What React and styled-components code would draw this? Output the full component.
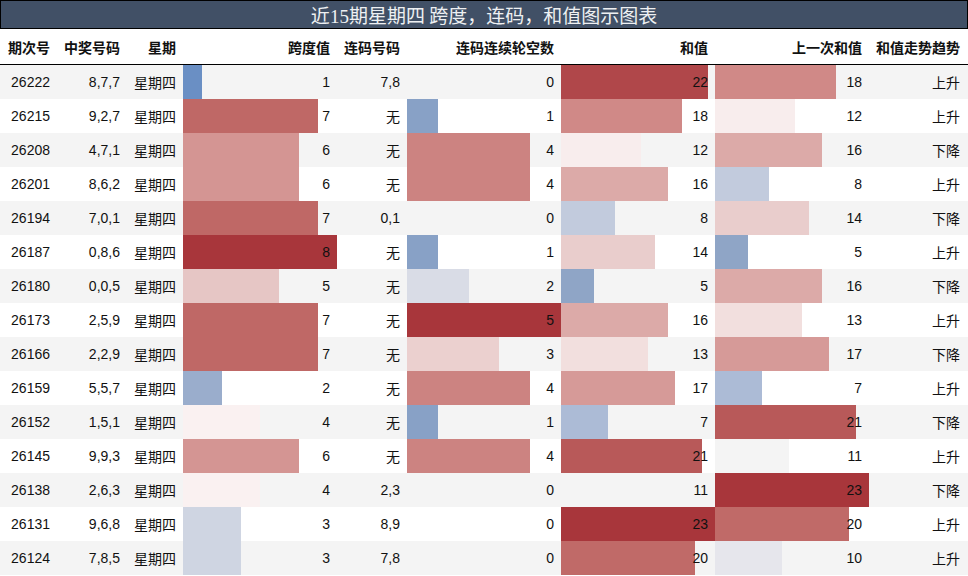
import React from 'react'
import styled, { createGlobalStyle } from 'styled-components'

const GlobalStyle = createGlobalStyle`
  html, body {
    margin: 0;
    padding: 0;
    background: #fff;
  }
  body {
    font-family: 'Liberation Sans', 'Noto Sans CJK SC', sans-serif;
    color: #111;
  }
`

const COLS = '57px 70px 56px 154px 70px 154px 154px 154px 98px'

const rows = [
  ['26222', '8,7,7', 1, '7,8', 0, 22, 18, '上升'],
  ['26215', '9,2,7', 7, '无', 1, 18, 12, '上升'],
  ['26208', '4,7,1', 6, '无', 4, 12, 16, '下降'],
  ['26201', '8,6,2', 6, '无', 4, 16, 8, '上升'],
  ['26194', '7,0,1', 7, '0,1', 0, 8, 14, '下降'],
  ['26187', '0,8,6', 8, '无', 1, 14, 5, '上升'],
  ['26180', '0,0,5', 5, '无', 2, 5, 16, '下降'],
  ['26173', '2,5,9', 7, '无', 5, 16, 13, '上升'],
  ['26166', '2,2,9', 7, '无', 3, 13, 17, '下降'],
  ['26159', '5,5,7', 2, '无', 4, 17, 7, '上升'],
  ['26152', '1,5,1', 4, '无', 1, 7, 21, '下降'],
  ['26145', '9,9,3', 6, '无', 4, 21, 11, '上升'],
  ['26138', '2,6,3', 4, '2,3', 0, 11, 23, '下降'],
  ['26131', '9,6,8', 3, '8,9', 0, 23, 20, '上升'],
  ['26124', '7,8,5', 3, '7,8', 0, 20, 10, '上升'],
]

// diverging palette, blue (low) -> light -> red (high)
const stops = [
  [0, '#4a76b8'],
  [0.125, '#6a8fc4'],
  [0.217, '#8fa5c6'],
  [0.304, '#acbbd6'],
  [0.375, '#cfd5e2'],
  [0.435, '#e6e6ec'],
  [0.478, '#f4f4f4'],
  [0.5, '#faf1f1'],
  [0.52, '#f8eeee'],
  [0.565, '#f2dfde'],
  [0.625, '#e6c6c5'],
  [0.696, '#dcaaa8'],
  [0.78, '#d08a88'],
  [0.87, '#c06a68'],
  [1, '#a8363b'],
]

const hex = h => [1, 3, 5].map(i => parseInt(h.slice(i, i + 2), 16))

const colorAt = t => {
  for (let i = 1; i < stops.length; i++) {
    const [t1, c1] = stops[i]
    const [t0, c0] = stops[i - 1]
    if (t <= t1) {
      const f = (t - t0) / (t1 - t0)
      const a = hex(c0)
      const b = hex(c1)
      const c = a.map((v, k) => Math.round(v + (b[k] - v) * f))
      return `rgb(${c.join(',')})`
    }
  }
  return stops[stops.length - 1][1]
}

const Page = styled.div`
  width: 968px;
`

const Title = styled.div`
  height: 27px;
  border: 1px solid #000;
  background: #415066;
  color: #eef0f2;
  font-family: 'Liberation Serif', 'Noto Sans CJK SC', serif;
  font-size: 19px;
  line-height: 27px;
  text-align: center;
`

const TitleCjk = styled.span`
  font-family: 'Noto Sans CJK SC', sans-serif;
`

const HeaderRow = styled.div`
  display: grid;
  grid-template-columns: ${COLS};
  height: 35px;
  border-bottom: 1px solid #000;
  background: #fff;
`

const HeadCell = styled.div`
  display: flex;
  align-items: center;
  justify-content: flex-end;
  padding-right: 7px;
  font-family: 'Noto Sans CJK SC', sans-serif;
  font-weight: 700;
  font-size: 14px;
  color: #111;
  white-space: nowrap;
`

const Row = styled.div`
  display: grid;
  grid-template-columns: ${COLS};
  height: 34px;
  background: ${p => (p.$striped ? '#f4f4f4' : '#fff')};
`

const Cell = styled.div`
  position: relative;
  display: flex;
  align-items: center;
  justify-content: flex-end;
  padding-right: 7px;
  font-size: 14px;
  white-space: nowrap;
`

const Bar = styled.div`
  position: absolute;
  left: 0;
  top: 0;
  bottom: 0;
`

const CellText = styled.span`
  position: relative;
  color: #111;
`

const BarCell = ({ value, max }) => (
  <Cell>
    {value > 0 && (
      <Bar
        style={{
          width: `${(value / max) * 154}px`,
          background: colorAt(value / max),
        }}
      />
    )}
    <CellText>{value}</CellText>
  </Cell>
)

const headers = [
  '期次号',
  '中奖号码',
  '星期',
  '跨度值',
  '连码号码',
  '连码连续轮空数',
  '和值',
  '上一次和值',
  '和值走势趋势',
]

const App = () => (
  <Page>
    <GlobalStyle />
    <Title>
      <TitleCjk>近</TitleCjk>15<TitleCjk>期星期四 跨度，连码，和值图示图表</TitleCjk>
    </Title>
    <HeaderRow>
      {headers.map(h => (
        <HeadCell key={h}>{h}</HeadCell>
      ))}
    </HeaderRow>
    {rows.map((r, i) => (
      <Row key={r[0]} $striped={i % 2 === 0}>
        <Cell>{r[0]}</Cell>
        <Cell>{r[1]}</Cell>
        <Cell>
          <CellText>星期四</CellText>
        </Cell>
        <BarCell value={r[2]} max={8} />
        <Cell>{r[3]}</Cell>
        <BarCell value={r[4]} max={5} />
        <BarCell value={r[5]} max={23} />
        <BarCell value={r[6]} max={23} />
        <Cell>{r[7]}</Cell>
      </Row>
    ))}
  </Page>
)

export default App
